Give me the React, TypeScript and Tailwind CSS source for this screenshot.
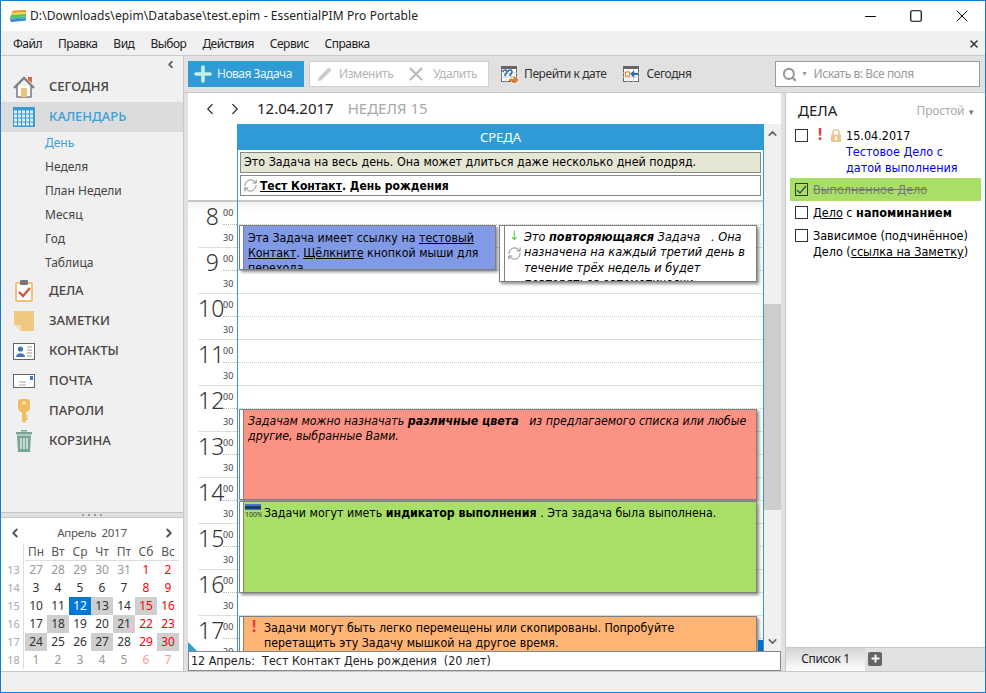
import React from "react";
import { ChevronLeft, ChevronRight, ChevronUp, ChevronDown, Search, X, Minus, Square, Plus, Pencil, RefreshCw } from "lucide-react";

const ui = "font-['Noto_Sans',sans-serif]";
const task = "font-['DejaVu_Sans_Condensed','DejaVu_Sans',sans-serif]";

const IconHome = () => (
  <svg width="24" height="24" viewBox="0 0 24 24">
    <path d="M5 11 V22 H19 V11" fill="#fff" stroke="#808080" strokeWidth="1.6" />
    <path d="M2 13 L12 3 L22 13" fill="none" stroke="#808080" strokeWidth="2.4" />
    <rect x="9" y="13" width="6" height="9" fill="#eac27c" />
    <path d="M16 2H20V8L16 5Z" fill="#e0604a" />
  </svg>
);
const IconCal = () => (
  <svg width="22" height="20" viewBox="0 0 22 20">
    <rect x="0" y="0" width="22" height="20" fill="#3a9bd2" />
    {[4, 8, 12, 16].flatMap((y) =>
      [1, 5, 9, 13, 17].map((x) => <rect key={`${x}-${y}`} x={x} y={y - 0.5} width="3" height="3" fill="#dcecf6" />),
    )}
  </svg>
);
const IconTasks = () => (
  <svg width="20" height="22" viewBox="0 0 20 22">
    <rect x="1" y="2" width="18" height="20" rx="2" fill="#f4c078" />
    <rect x="3" y="4" width="14" height="16" fill="#fff" />
    <rect x="6" y="0" width="8" height="5" rx="1" fill="#777" />
    <path d="M5 12 L9 16 L16 8" fill="none" stroke="#d9533f" strokeWidth="2.4" />
  </svg>
);
const IconNote = () => (
  <svg width="20" height="20" viewBox="0 0 20 20">
    <path d="M0 0H20V20H7L0 13Z" fill="#efc97f" />
    <path d="M1 14H7V20Z" fill="#f5dfb0" />
  </svg>
);
const IconContact = () => (
  <svg width="22" height="17" viewBox="0 0 22 17">
    <rect x="0.5" y="0.5" width="21" height="16" fill="#fff" stroke="#666" />
    <circle cx="7.5" cy="6" r="2.6" fill="#3f78b5" />
    <path d="M3 14 C3 9 12 9 12 14Z" fill="#3f78b5" />
    <path d="M14 4H19M14 7H19M14 10H19M14 13H19" stroke="#999" />
  </svg>
);
const IconMail = () => (
  <svg width="22" height="14" viewBox="0 0 22 14">
    <rect x="0.5" y="0.5" width="21" height="13" fill="#fff" stroke="#666" />
    <rect x="17" y="2" width="3" height="4" fill="#3f78b5" />
    <path d="M6 8H13M6 11H13" stroke="#aaa" />
  </svg>
);
const IconKey = () => (
  <svg width="14" height="24" viewBox="0 0 14 24">
    <path d="M1 3 Q1 0 4 0 H10 Q13 0 13 3 V9 Q13 12 9 13 V22 L7 24 L5 22 V13 Q1 12 1 9Z" fill="#efbc5f" />
    <circle cx="7" cy="4" r="1.6" fill="#fbe7bc" />
    <path d="M9 17H11M9 20H11" stroke="#efbc5f" strokeWidth="1.5" />
  </svg>
);
const IconTrash = () => (
  <svg width="16" height="22" viewBox="0 0 16 22">
    <rect x="5" y="0" width="6" height="1.5" fill="#7aa795" />
    <rect x="0" y="2" width="16" height="2.5" fill="#7aa795" />
    <path d="M1 5.5H15L14 22H2Z" fill="#7aa795" />
    <path d="M5 8V19M8 8V19M11 8V19" stroke="#e8f0ec" strokeWidth="1.4" />
  </svg>
);
const Logo = () => (
  <svg width="16" height="12" viewBox="0 0 16 12">
    <path d="M3 0.5 L16 0 V2 L1.5 3Z" fill="#ef8f3a" />
    <path d="M1.5 3 L16 2 V4 L1 5Z" fill="#f5d53f" />
    <path d="M1 5 L16 4 V6.5 L0 7.5Z" fill="#5fbf4a" />
    <path d="M0 7.5 L16 6.5 V8.5 L0 9.5Z" fill="#3fb5a8" />
    <path d="M0 9.5 L16 8.5 V10.5 L1 12Z" fill="#2f80d6" />
  </svg>
);
const CalTool = ({ kind }: { kind: "goto" | "today" }) => (
  <svg width="17" height="17" viewBox="0 0 17 17">
    <rect x="0.5" y="0.5" width="15" height="15" fill="#fff" stroke="#666" />
    <rect x="0" y="0" width="16" height="3" fill="#666" />
    <path d="M0 7H16M0 11H16M5 3V16M10.5 3V16" stroke="#c8c8c8" />
    {kind === "goto" ? (
      <>
        <path d="M2 6 Q2 4 4 4 Q6 4 6 6 Q6 7.5 4 8.5V10" fill="none" stroke="#2c6fb0" strokeWidth="1.5" />
        <path d="M7 6 Q7 4 9 4 Q11 4 11 6 Q11 7.5 9 8.5V10" fill="none" stroke="#2c6fb0" strokeWidth="1.5" />
        <path d="M8 14H15M12.5 11L16 14L12.5 17" fill="none" stroke="#e87d1e" strokeWidth="2" />
      </>
    ) : (
      <>
        <rect x="2.5" y="6" width="4" height="4" fill="#fff" stroke="#e87d1e" />
        <path d="M15 8H9M11 5.5L8.5 8L11 10.5" fill="none" stroke="#2c6fb0" strokeWidth="1.8" />
      </>
    )}
  </svg>
);
const Lock = () => (
  <svg width="10" height="13" viewBox="0 0 10 13">
    <path d="M2 6V3.5a3 3 0 0 1 6 0V6" fill="none" stroke="#eec58b" strokeWidth="1.6" />
    <rect x="0" y="5.5" width="10" height="7.5" fill="#eec58b" />
    <rect x="4" y="7.5" width="2" height="3.5" fill="#fff" />
  </svg>
);
const Progress = () => (
  <svg width="17" height="14" viewBox="0 0 17 14">
    <rect x="0" y="0" width="16" height="2" fill="#4a78c0" />
    <rect x="0" y="2" width="16" height="3" fill="#1e3a66" />
    <rect x="0" y="5" width="16" height="1" fill="#4a78c0" />
    <text x="0" y="13" fontSize="7" fill="#333" fontFamily="'Noto Sans',sans-serif">100%</text>
  </svg>
);

const NavItem = ({ icon, label, active }: { icon: React.ReactNode; label: string; active?: boolean }) => (
  <div className={`flex h-[30px] items-center ${active ? "bg-[#dcdcdc]" : ""}`}>
    <div className="flex w-[48px] justify-center pr-[3px]">{icon}</div>
    <span className={`text-[13px] font-medium ${active ? "text-[#3aa0da]" : "text-[#4a4340]"}`}>{label}</span>
  </div>
);

const SubItem = ({ label, active }: { label: string; active?: boolean }) => (
  <div className={`flex h-6 items-center pl-[44px] text-[12px] ${active ? "text-[#3aa0da]" : "text-[#444]"}`}>{label}</div>
);

const weeks: [number, number[]][] = [
  [13, [27, 28, 29, 30, 31, 1, 2]],
  [14, [3, 4, 5, 6, 7, 8, 9]],
  [15, [10, 11, 12, 13, 14, 15, 16]],
  [16, [17, 18, 19, 20, 21, 22, 23]],
  [17, [24, 25, 26, 27, 28, 29, 30]],
  [18, [1, 2, 3, 4, 5, 6, 7]],
];
const marked = [13, 15, 18, 21, 24, 27, 30];

const MiniCalendar = () => (
  <div className="h-[154px] shrink-0 border-t border-[#c8c8c8] bg-white text-[12px] text-[#333]">
    <div className="flex h-[26px] items-center justify-between pl-[7px] pr-[7px] pt-[3px]">
      <ChevronLeft size={14} strokeWidth={3.4} className="text-[#555]" />
      <span className="text-[11.5px] tracking-[-0.3px] text-[#555]">Апрель&nbsp; 2017</span>
      <ChevronRight size={14} strokeWidth={3.4} className="text-[#555]" />
    </div>
    <div className="flex pl-[3px]">
      <div className="w-[20px] border-r border-[#ddd]">
        <div className="h-[17px]" />
        {weeks.map(([w]) => (
          <div key={w} className="flex h-[18px] items-center justify-center text-[11px] text-[#aaa]">{w}</div>
        ))}
      </div>
      <div className="pl-[1px]">
        <div className="flex h-[17px] border-b border-[#ddd] text-[#555]">
          {["Пн", "Вт", "Ср", "Чт", "Пт", "Сб", "Вс"].map((d) => (
            <div key={d} className="flex w-[22px] items-center justify-center">{d}</div>
          ))}
        </div>
        {weeks.map(([w, days], r) => (
          <div key={w} className="flex">
            {days.map((d, i) => {
              const out = (r === 0 && d > 20) || r === 5;
              const weekend = i > 4;
              const sel = d === 12 && r === 2;
              const color = sel
                ? "text-white"
                : weekend
                  ? out ? "text-[#ff9a9a]" : "text-[#f00]"
                  : out ? "text-[#999]" : "text-[#333]";
              const bg = sel ? "bg-[#0078d7]" : !out && marked.includes(d) ? "bg-[#cfcfcf]" : "";
              return (
                <div key={i} className={`flex h-[18px] w-[22px] items-center justify-center ${color} ${bg}`}>{d}</div>
              );
            })}
          </div>
        ))}
      </div>
    </div>
  </div>
);

const hours = [8, 9, 10, 11, 12, 13, 14, 15, 16, 17];

const HourLabel = ({ h }: { h: number }) => (
  <div className="ml-[10px] flex h-[46px] border-b border-[#ddd]">
    <div className="w-[21px] text-right text-[23px] font-light leading-[28px] text-[#333]">{h}</div>
    <div className="ml-[4px] flex w-[14px] flex-col text-[9px] text-[#444]">
      <div className="h-[23px] border-b border-dotted border-[#bbb] pt-[4px] leading-[14px]">00</div>
      <div className="pt-[6px] leading-[14px]">30</div>
    </div>
  </div>
);

const Event = ({ className, stripe = "w-[4px]", children }: { className: string; stripe?: string; children: React.ReactNode }) => (
  <div className={`absolute flex overflow-hidden border border-[#808080] shadow-[2px_2px_3px_rgba(0,0,0,0.45)] ${className}`}>
    <div className={`shrink-0 border-r border-[#808080] bg-white ${stripe}`} />
    {children}
  </div>
);

export default function App() {
  return (
    <div className={`flex h-[693px] w-[986px] flex-col overflow-hidden border border-[#0f7fd6] bg-[#efefef] ${ui}`}>
      {/* title bar */}
      <div className="flex h-[30px] shrink-0 items-center bg-white pl-[9px] text-[12px] text-[#222]">
        <Logo />
        <span className="ml-[4px] tracking-[0.09px]">D:\Downloads\epim\Database\test.epim - EssentialPIM Pro Portable</span>
        <div className="ml-auto flex items-center">
          <Minus size={17} strokeWidth={1.4} className="mr-[30px] text-black" />
          <Square size={14} strokeWidth={2} className="mr-[29px] text-black" />
          <X size={20} strokeWidth={1.2} className="mr-[13px] text-black" />
        </div>
      </div>
      {/* menu */}
      <div className="flex h-[25px] shrink-0 items-center gap-4 border-b border-[#c8c8c8] bg-[#f0f0f0] pl-[12px] pr-[5px] pt-px text-[12px] tracking-[-0.5px] text-[#222]">
        {["Файл", "Правка", "Вид", "Выбор", "Действия", "Сервис", "Справка"].map((m) => (
          <span key={m}>{m}</span>
        ))}
        <X size={12} strokeWidth={3} className="ml-auto text-[#333]" />
      </div>

      <div className="flex min-h-0 flex-1">
        {/* left column */}
        <div className="flex w-[183px] shrink-0 flex-col border-r border-[#c8c8c8] bg-[#f0f0f0]">
          <div className="flex-1">
            <div className="flex h-[16px] items-center justify-end pr-[7px]">
              <ChevronLeft size={11} strokeWidth={4} className="text-[#666]" />
            </div>
            <NavItem icon={<IconHome />} label="СЕГОДНЯ" />
            <NavItem icon={<IconCal />} label="КАЛЕНДАРЬ" active />
            <div className="-mt-px mb-px">
              <SubItem label="День" active />
              <SubItem label="Неделя" />
              <SubItem label="План Недели" />
              <SubItem label="Месяц" />
              <SubItem label="Год" />
              <SubItem label="Таблица" />
            </div>
            <NavItem icon={<IconTasks />} label="ДЕЛА" />
            <NavItem icon={<IconNote />} label="ЗАМЕТКИ" />
            <NavItem icon={<IconContact />} label="КОНТАКТЫ" />
            <NavItem icon={<IconMail />} label="ПОЧТА" />
            <NavItem icon={<IconKey />} label="ПАРОЛИ" />
            <NavItem icon={<IconTrash />} label="КОРЗИНА" />
          </div>
          <div className="flex h-[5px] shrink-0 items-center justify-center gap-[4px] border-t border-[#c8c8c8] bg-[#e1e1e1]">
            {[0, 1, 2, 3].map((i) => (
              <div key={i} className="h-[2px] w-[2px] bg-[#999]" />
            ))}
          </div>
          <MiniCalendar />
        </div>

        {/* main */}
        <div className="flex min-w-0 flex-1 flex-col bg-[#e1e1e1]">
          {/* toolbar */}
          <div className="flex h-[37px] shrink-0 items-center border-b border-[#c8c8c8] pl-[4px] pr-[5px] text-[12px] tracking-[-0.42px]">
            <div className="flex h-[26px] w-[116px] items-center bg-[#2f9bd6] pl-[3px] tracking-[-0.5px] text-[#e8f6fc]">
              <Plus size={24} strokeWidth={3.6} className="text-[#c5f2e4]" />
              <span className="ml-[2px]">Новая Задача</span>
            </div>
            <div className="ml-[5px] flex h-[26px] w-[180px] items-center border border-[#cfcfcf] bg-white pl-[7px] text-[#b5b5b5]">
              <Pencil size={15} fill="#ccc" strokeWidth={1} className="text-[#ccc]" />
              <span className="ml-[7px]">Изменить</span>
              <X size={22} strokeWidth={2.4} className="ml-[12px] text-[#bbb]" />
              <span className="ml-[6px]">Удалить</span>
            </div>
            <div className="ml-[12px] flex items-center text-[#333]">
              <CalTool kind="goto" />
              <span className="ml-[6px]">Перейти к дате</span>
            </div>
            <div className="ml-[17px] flex items-center text-[#333]">
              <CalTool kind="today" />
              <span className="ml-[6px]">Сегодня</span>
            </div>
            <div className="ml-auto flex h-[26px] w-[205px] items-center border border-[#999] bg-white pl-[6px] text-[#999]">
              <Search size={15} strokeWidth={3.4} className="text-[#999]" />
              <span className="ml-[4px] text-[7px]">▼</span>
              <span className="ml-[6px]">Искать в: Все поля</span>
            </div>
          </div>

          <div className="flex min-h-0 flex-1 pl-[4px]">
            {/* day view */}
            <div className="flex w-[593px] shrink-0 flex-col">
              <div className="flex min-h-0 flex-1 flex-col bg-white">
                <div className="flex h-[31px] shrink-0 items-center pl-[13px]">
                  <ChevronLeft size={18} strokeWidth={1.6} className="text-[#333]" />
                  <ChevronRight size={18} strokeWidth={1.6} className="ml-[7px] text-[#333]" />
                  <span className="ml-[13px] text-[15px] text-[#222]">12.04.2017</span>
                  <span className="ml-[14px] text-[15px] text-[#aaa]">НЕДЕЛЯ 15</span>
                </div>
                <div className="relative flex min-h-0 flex-1">
                  {/* hours */}
                  <div className="w-[49px] shrink-0 overflow-hidden">
                    <div className="h-[78px] border-b-2 border-[#c8c8c8]" />
                    <div className="bg-gradient-to-b from-[#f3f3f3] to-white to-[10px]">
                      {hours.map((h) => (
                        <HourLabel key={h} h={h} />
                      ))}
                    </div>
                  </div>
                  {/* day column */}
                  <div className="w-[527px] shrink-0 overflow-hidden border-x border-[#2f9bd6]">
                    <div className="flex h-[26px] items-center justify-center bg-[#2f9bd6] pt-px text-[13px] text-white">СРЕДА</div>
                    <div className={`h-[52px] border-b-2 border-[#c8c8c8] px-[2px] pt-[2px] text-[12.4px] text-black ${task}`}>
                      <div className="flex h-[21px] items-center border border-[#888] bg-[#e6e6d5] pl-[3px]">
                        Это Задача на весь день. Она может длиться даже несколько дней подряд.
                      </div>
                      <div className="mt-[2px] flex h-[21px] items-center border border-[#888] bg-white pl-[2px] text-[12px]">
                        <RefreshCw size={15} strokeWidth={1.6} className="text-[#888]" />
                        <span className="ml-[2px] font-bold"><span className="underline">Тест Контакт</span>. День рождения</span>
                      </div>
                    </div>
                    <div className={`relative text-[12.3px] leading-[15px] text-black ${task}`}>
                      {hours.map((h) => (
                        <div key={h} className="h-[46px] border-b border-[#ddd]">
                          <div className="h-[23px] border-b border-dotted border-[#ccc]" />
                        </div>
                      ))}
                      <div className="pointer-events-none absolute left-0 right-0 top-0 h-[10px] bg-gradient-to-b from-[#f3f3f3] to-transparent" />
                      <Event className="left-[1px] top-[23px] h-[45px] w-[257px] bg-[#819ae6]">
                        <div className="px-[4px] pt-[5px]">
                          Эта Задача имеет ссылку на <span className="underline">тестовый Контакт</span>. <span className="underline">Щёлкните</span> кнопкой мыши для перехода
                        </div>
                      </Event>
                      <Event className="left-[261px] top-[23px] h-[57px] w-[258px] bg-white" stripe="w-[5px]">
                        <div className="flex w-[19px] shrink-0 flex-col items-center pt-[3px] text-[#44d04a]">
                          <span className="text-[13px] leading-[14px]">↓</span>
                          <RefreshCw size={15} strokeWidth={1.6} className="mt-[3px] text-[#888]" />
                        </div>
                        <div className="pt-[3px] text-[12.6px] leading-[15.3px] italic">
                          Это <span className="font-semibold">повторяющаяся</span> Задача&nbsp;&nbsp; . Она назначена на каждый третий день в течение трёх недель и будет повторяться автоматически
                        </div>
                      </Event>
                      <Event className="left-[1px] top-[207px] h-[91px] w-[518px] bg-[#fc9283]">
                        <div className="px-[4px] pt-[4px] italic">
                          Задачам можно назначать <span className="font-bold">различные цвета</span>&nbsp;&nbsp; из предлагаемого списка или любые другие, выбранные Вами.
                        </div>
                      </Event>
                      <Event className="left-[1px] top-[299px] h-[92px] w-[518px] bg-[#a8df66]">
                        <div className="pl-[1px] pt-[2px]"><Progress /></div>
                        <div className="pl-[2px] pt-[4px]">
                          Задачи могут иметь <span className="font-bold">индикатор выполнения</span> . Эта задача была выполнена.
                        </div>
                      </Event>
                      <Event className="left-[1px] top-[414px] h-[60px] w-[518px] bg-[#fdb474]">
                        <div className="w-[20px] shrink-0 pt-[3px] text-center text-[15px] font-bold text-[#e8413c]">!</div>
                        <div className="pt-[4px]">
                          Задачи могут быть легко перемещены или скопированы. Попробуйте<br />перетащить эту Задачу мышкой на другое время.
                        </div>
                      </Event>
                    </div>
                  </div>
                  <div className="absolute bottom-0 left-0 h-0 w-0 border-b-[9px] border-r-[9px] border-b-[#2f9bd6] border-r-transparent" />
                  <div className="absolute bottom-0 left-[570px] h-[11px] w-[5px] bg-[#0b6dbf]" />
                  {/* scrollbar */}
                  <div className="flex w-[17px] shrink-0 flex-col items-center bg-[#f0f0f0]">
                    <ChevronUp size={13} strokeWidth={3} className="mt-[3px] text-[#666]" />
                    <div className="mt-[164px] h-[206px] w-full bg-[#cdcdcd]" />
                    <ChevronDown size={13} strokeWidth={3} className="mt-auto mb-[3px] text-[#666]" />
                  </div>
                </div>
              </div>
              <div className={`flex h-[20px] shrink-0 items-center border border-[#888] bg-white pl-[2px] text-[12.4px] text-[#222] ${task}`}>
                12 Апрель:&nbsp; Тест Контакт День рождения&nbsp; (20 лет)
              </div>
            </div>

            {/* tasks */}
            <div className="ml-[4px] flex min-w-0 flex-1 flex-col border-l border-[#c8c8c8]">
              <div className={`flex-1 bg-white text-[12.5px] leading-[16px] text-black ${task}`}>
                <div className={`flex h-[35px] items-center justify-between pl-[12px] pr-[10px] ${ui}`}>
                  <span className="-mt-[2px] text-[15px] text-[#222]">ДЕЛА</span>
                  <span className="mt-[1px] text-[12px] tracking-[-0.2px] text-[#aaa]">Простой <span className="text-[8px] text-[#777]">▼</span></span>
                </div>
                <div className="flex pl-[9px]">
                  <div className="mt-[1px] h-[13px] w-[13px] shrink-0 border border-[#333]" />
                  <span className="ml-[9px] w-[5px] text-[15px] font-bold leading-[15px] text-[#e8413c]">!</span>
                  <span className="ml-[9px] mt-[1px]"><Lock /></span>
                  <div className="ml-[5px]">
                    <div>15.04.2017</div>
                    <div className="text-[#0000f0]">Тестовое Дело с<br />датой выполнения</div>
                  </div>
                </div>
                <div className="mx-[4px] mt-[2px] flex h-[23px] items-center bg-[#a8df66] pl-[5px] text-[#777] line-through">
                  <div className="flex h-[13px] w-[13px] shrink-0 items-center justify-center border border-[#333]">
                    <svg width="11" height="11" viewBox="0 0 11 11"><path d="M1 6 L4 9 L10 2" fill="none" stroke="#444" strokeWidth="1.3" /></svg>
                  </div>
                  <span className="ml-[5px]">Выполненное Дело</span>
                </div>
                <div className="mt-[3px] flex items-start pl-[9px] pt-[1px]">
                  <div className="mt-[1px] h-[13px] w-[13px] shrink-0 border border-[#333]" />
                  <span className="ml-[5px]"><span className="underline">Дело</span> с <span className="font-bold">напоминанием</span></span>
                </div>
                <div className="mt-[7px] flex items-start pl-[9px]">
                  <div className="mt-[1px] h-[13px] w-[13px] shrink-0 border border-[#333]" />
                  <span className="ml-[5px]">Зависимое (подчинённое)<br />Дело (<span className="underline">ссылка на Заметку</span>)</span>
                </div>
              </div>
              <div className="flex h-[24px] shrink-0 items-center border-t border-[#c8c8c8] text-[12px] tracking-[-0.4px] text-[#222]">
                <div className="flex h-full w-[79px] items-center justify-center bg-gradient-to-b from-[#d4d4d4] to-white pb-[2px]">Список 1</div>
                <div className="mb-[2px] ml-[3px] flex h-[14px] w-[14px] items-center justify-center rounded-[2px] bg-[#666]">
                  <Plus size={11} strokeWidth={4} className="text-white" />
                </div>
              </div>
            </div>
          </div>
        </div>
      </div>
      {/* status bar */}
      <div className="h-[21px] shrink-0 border-t border-[#c8c8c8] bg-[#efefef]" />
    </div>
  );
}
